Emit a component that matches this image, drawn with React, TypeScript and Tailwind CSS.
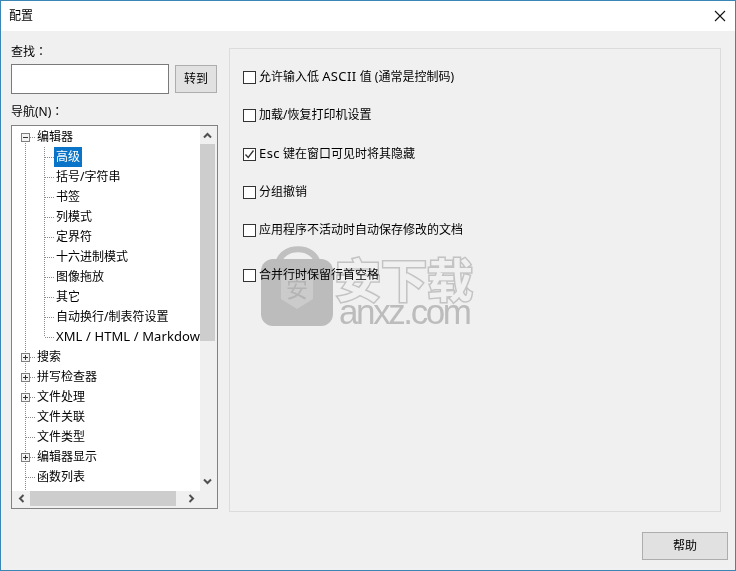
import React from "react";

type TreeRow = {
  label: string;
  child?: boolean;
  last?: boolean;
  box?: "plus" | "minus";
  selected?: boolean;
  first?: boolean;
};

const rows: TreeRow[] = [
  { label: "编辑器", box: "minus", first: true },
  { label: "高级", child: true, selected: true },
  { label: "括号/字符串", child: true },
  { label: "书签", child: true },
  { label: "列模式", child: true },
  { label: "定界符", child: true },
  { label: "十六进制模式", child: true },
  { label: "图像拖放", child: true },
  { label: "其它", child: true },
  { label: "自动换行/制表符设置", child: true },
  { label: "XML / HTML / Markdown", child: true, last: true },
  { label: "搜索", box: "plus" },
  { label: "拼写检查器", box: "plus" },
  { label: "文件处理", box: "plus" },
  { label: "文件关联" },
  { label: "文件类型" },
  { label: "编辑器显示", box: "plus" },
  { label: "函数列表" },
  { label: "" },
];

const latin = "text-[13px] tracking-[0.4px]";

const options = [
  {
    label: (
      <>
        允许输入低 <span className={latin}>ASCII</span> 值 (通常是控制码)
      </>
    ),
    className: "mt-[18px]",
  },
  { label: "加载/恢复打印机设置", className: "mt-[18px]" },
  {
    label: (
      <>
        <span className={latin}>Esc</span> 键在窗口可见时将其隐藏
      </>
    ),
    className: "mt-[19px]",
    checked: true,
  },
  { label: "分组撤销", className: "mt-[18px]" },
  { label: "应用程序不活动时自动保存修改的文档", className: "mt-[18px]" },
  { label: "合并行时保留行首空格", className: "mt-[25px]" },
];

// dotted tree lines and the +/- box in front of a row
function TreeLines({ row }: { row: TreeRow }) {
  const dots = { stroke: "#8a8a8a", strokeDasharray: "1 1", shapeRendering: "crispEdges" as const };
  return (
    <svg width={row.child ? 42 : 25} height={20} className="shrink-0">
      <line x1={13.5} x2={13.5} y1={row.first ? 10 : 0} y2={20} {...dots} />
      {row.child ? (
        <>
          <line x1={32.5} x2={32.5} y1={0} y2={row.last ? 10 : 20} {...dots} />
          <line x1={33} x2={42} y1={10.5} y2={10.5} {...dots} />
        </>
      ) : (
        row.label && <line x1={14} x2={24} y1={10.5} y2={10.5} {...dots} />
      )}
      {row.box && (
        <>
          <rect x={9.5} y={6.5} width={8} height={8} fill="#f4f4f4" stroke="#7f7f7f" />
          <line x1={11} x2={16} y1={10.5} y2={10.5} stroke="#333" shapeRendering="crispEdges" />
          {row.box === "plus" && (
            <line x1={13.5} x2={13.5} y1={8} y2={13} stroke="#333" shapeRendering="crispEdges" />
          )}
        </>
      )}
    </svg>
  );
}

function Chevron({ dir }: { dir: "up" | "down" | "left" | "right" }) {
  const pts = {
    up: "2,7.5 5.5,4 9,7.5",
    down: "2,3.5 5.5,7 9,3.5",
    left: "7.5,2 4,5.5 7.5,9",
    right: "3.5,2 7,5.5 3.5,9",
  }[dir];
  return (
    <svg width={11} height={11} viewBox="0 0 11 11">
      <polyline points={pts} fill="none" stroke="#505050" strokeWidth={2} />
    </svg>
  );
}

function Checkbox({ checked }: { checked?: boolean }) {
  return (
    <span className="w-[13px] h-[13px] shrink-0 border border-[#333333] bg-white flex items-center justify-center">
      {checked && (
        <svg width={11} height={11} viewBox="0 0 11 11">
          <polyline points="1.5,5.5 4.2,8.5 9.5,1.5" fill="none" stroke="#333" strokeWidth={1.3} />
        </svg>
      )}
    </span>
  );
}

function Watermark() {
  return (
    <div className="absolute left-[260px] top-[244px] w-[220px] h-[84px] pointer-events-none mix-blend-multiply">
      <svg width={74} height={84} viewBox="0 0 74 84" className="absolute left-0 top-0">
        <path d="M17 20 C19 -1 55 -1 57 20" fill="none" stroke="#cccccc" strokeWidth={6} />
        <rect x={0} y={14} width={72} height={67} rx={12} fill="#c8c8c8" />
        <path d="M20 29 H52 V54 L36 64 L20 54 Z" fill="#d8d8d8" />
        <text x={36} y={52} textAnchor="middle" fontSize={22} fill="#bfbfbf" fontFamily="'Noto Sans CJK SC', sans-serif">
          安
        </text>
      </svg>
      <div className="absolute left-[74px] top-[3px] text-[46px] leading-[58px] font-bold text-white whitespace-nowrap [-webkit-text-stroke:3px_#d0d0d0] [paint-order:stroke_fill] font-['Noto_Sans_CJK_SC',sans-serif]">
        安下载
      </div>
      <div className="absolute left-[78px] top-[47px] text-[35px] leading-[40px] tracking-[-2.4px] text-[#c8c8c8] whitespace-nowrap font-['Liberation_Sans',sans-serif]">
        anxz.com
      </div>
    </div>
  );
}

export default function App(): React.ReactElement {
  return (
    <div className="relative w-[736px] h-[571px] flex flex-col border border-[#3a86b4] bg-[#f0f0f0] text-black text-[12px] font-['Noto_Sans','Noto_Sans_CJK_SC',sans-serif] overflow-hidden">
      <header className="h-[30px] bg-white flex items-center justify-between pl-2 pr-[9px]">
        <span>配置</span>
        <svg width={12} height={12} viewBox="0 0 12 12">
          <path d="M1 1 L11 11 M11 1 L1 11" stroke="#111" strokeWidth={1.1} />
        </svg>
      </header>

      <div className="h-[501px] flex items-start pl-[10px]">
        {/* left column */}
        <div className="w-[207px] pt-[12px]">
          <div className="h-[17px] leading-[15px]">
            查找<span className="font-['Noto_Sans_CJK_TC',sans-serif]">：</span>
          </div>
          <div className="mt-[4px] flex items-center">
            <div className="w-[158px] h-[30px] border border-[#7a7a7a] bg-white" />
            <button className="ml-[6px] w-[42px] h-[28px] border border-[#adadad] bg-[#e1e1e1]">转到</button>
          </div>
          <div className="mt-[9px] h-[17px] leading-[15px]">
            导航(N)<span className="font-['Noto_Sans_CJK_TC',sans-serif]">：</span>
          </div>
          <div className="mt-[5px] w-[207px] h-[384px] border border-[#828282] bg-white flex flex-col">
            <div className="h-[365px] flex">
              <ul className="w-[188px] pt-px overflow-hidden">
                {rows.map((row) => (
                  <li key={row.label || "end"} className="h-5 flex items-center whitespace-nowrap">
                    <TreeLines row={row} />
                    <span
                      className={
                        row.selected
                          ? "h-5 px-[2px] leading-5 bg-[#0a74c8] text-white"
                          : row.last
                            ? "h-5 px-[2px] leading-[18px] text-[13px] tracking-[0.1px]"
                            : row.child
                              ? "h-5 px-[2px] leading-5"
                              : "h-5 leading-5"
                      }
                    >
                      {row.label}
                    </span>
                  </li>
                ))}
              </ul>
              <div className="w-[17px] bg-[#f0f0f0] flex flex-col items-start">
                <div className="w-[15px] h-[18px] flex items-center justify-center">
                  <Chevron dir="up" />
                </div>
                <div className="w-[15px] h-[197px] bg-[#cdcdcd]" />
                <div className="w-[15px] flex-1 flex items-end justify-center pb-[4px]">
                  <Chevron dir="down" />
                </div>
              </div>
            </div>
            <div className="h-[17px] bg-[#f0f0f0] flex items-start">
              <div className="w-[18px] h-[15px] flex items-center justify-center">
                <Chevron dir="left" />
              </div>
              <div className="w-[146px] h-[15px] bg-[#cdcdcd]" />
              <div className="ml-[8px] w-[14px] h-[15px] flex items-center justify-center">
                <Chevron dir="right" />
              </div>
            </div>
          </div>
        </div>

        {/* options panel */}
        <section className="ml-[11px] mt-[17px] w-[492px] h-[464px] border border-[#dcdcdc] pl-[13px]">
          {options.map((opt, i) => (
            <label key={i} className={`h-5 flex items-center gap-[3px] ${opt.className}`}>
              <Checkbox checked={opt.checked} />
              <span className="whitespace-nowrap">{opt.label}</span>
            </label>
          ))}
        </section>
      </div>

      <footer className="flex justify-end pr-[7px]">
        <button className="w-[86px] h-[28px] border border-[#adadad] bg-[#e1e1e1]">帮助</button>
      </footer>

      <Watermark />
    </div>
  );
}
